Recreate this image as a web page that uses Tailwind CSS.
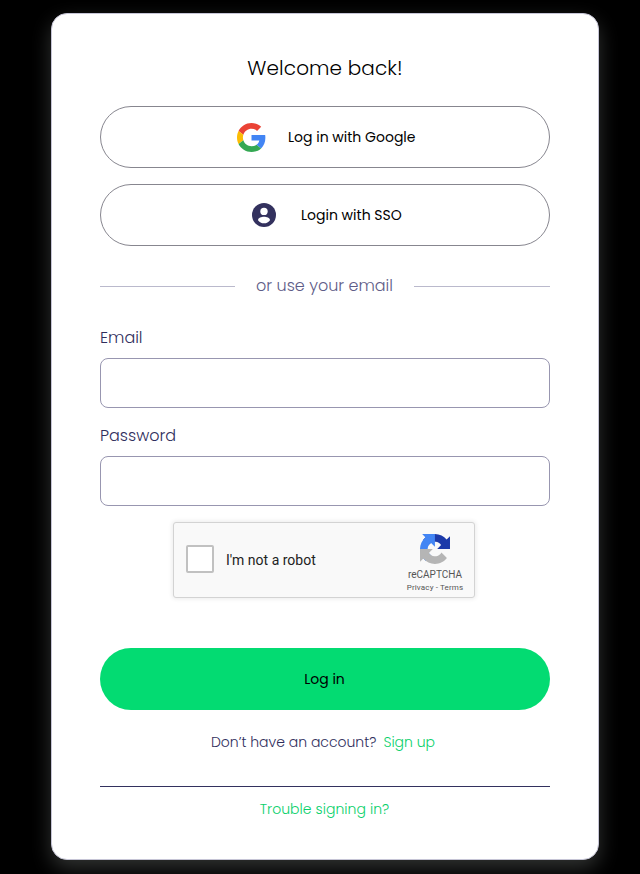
<!DOCTYPE html>
<html lang="en">
<head>
<meta charset="utf-8">
<title>Log in</title>
<script src="https://cdn.jsdelivr.net/npm/@tailwindcss/browser@4"></script>
</head>
<body class="bg-black h-[874px] overflow-hidden pt-[13px] pl-[51px] font-[Poppins,Inter,sans-serif] text-[#2f2e5c]">
<main class="w-[548px] h-[847px] rounded-[16px] bg-white border border-[#c6c5d6] px-12 pt-[39px] shadow-[0_8px_20px_rgba(245,255,252,0.2)]">
  <h1 class="h-[30px] flex items-center justify-center text-[20px] font-light text-black whitespace-nowrap tracking-[0.1px]">Welcome back!</h1>
  <button class="mt-[23px] w-full h-[62px] rounded-full border border-[#87868f] flex items-center pl-[136px] text-[14px] text-black">
    <svg class="size-[29px] mr-[22px]" viewBox="0 0 48 48"><path fill="#ea4335" d="M24 9.5c3.54 0 6.71 1.22 9.21 3.6l6.85-6.85C35.9 2.38 30.47 0 24 0 14.62 0 6.51 5.38 2.56 13.22l7.98 6.19C12.43 13.72 17.74 9.5 24 9.5z"/><path fill="#4285f4" d="M46.98 24.55c0-1.57-.15-3.09-.38-4.55H24v9.02h12.94c-.58 2.96-2.26 5.48-4.78 7.18l7.73 6c4.51-4.18 7.09-10.36 7.09-17.65z"/><path fill="#fbbc05" d="M10.53 28.59c-.48-1.45-.76-2.99-.76-4.59s.27-3.14.76-4.59l-7.98-6.19C.92 16.46 0 20.12 0 24c0 3.88.92 7.54 2.56 10.78l7.97-6.19z"/><path fill="#34a853" d="M24 48c6.48 0 11.93-2.13 15.89-5.81l-7.73-6c-2.15 1.45-4.92 2.3-8.16 2.3-6.26 0-11.57-4.22-13.47-9.91l-7.98 6.19C6.51 42.62 14.62 48 24 48z"/></svg>
    <span class="whitespace-nowrap">Log in with Google</span>
  </button>
  <button class="mt-4 w-full h-[62px] rounded-full border border-[#87868f] flex items-center pl-[151px] text-[14px] text-black">
    <svg class="size-[24px] mr-[25px]" viewBox="0 0 24 24"><circle cx="12" cy="12" r="12" fill="#33315e"/><circle cx="12" cy="8.4" r="3.7" fill="#fff"/><path fill="#fff" d="M6 17.2c.2-2.4 3.4-3.4 6-3.4s5.8 1 6 3.4c-1.3 1.9-3.5 3.1-6 3.1s-4.700-1.200-6-3.100z"/></svg>
    <span class="whitespace-nowrap">Login with SSO</span>
  </button>
  <div class="mt-[28px] h-6 flex items-center">
    <span class="h-px w-[135px] bg-[#bab9cc]"></span>
    <span class="w-[179px] text-center text-[16px] font-light text-[#5e5c87] whitespace-nowrap">or use your email</span>
    <span class="h-px w-[136px] bg-[#bab9cc]"></span>
  </div>
  <form>
    <label class="mt-[28px] h-6 flex items-center text-[16px] font-light" for="email">Email</label>
    <input id="email" type="email" class="mt-2 block w-full h-[50px] rounded-lg border border-[#9896b0]">
    <label class="mt-4 h-6 flex items-center text-[16px] font-light" for="pw">Password</label>
    <input id="pw" type="password" class="mt-2 block w-full h-[50px] rounded-lg border border-[#9896b0]">
    <div class="mt-4 ml-[73px] w-[302px] h-[76px] rounded-[3px] border border-[#d3d3d3] bg-[#f9f9f9] shadow-[0_0_4px_1px_rgba(0,0,0,0.08)] flex font-[Roboto,sans-serif]">
      <span class="mt-[22px] ml-3 size-[28px] shrink-0 border-2 border-[#c1c1c1] rounded-[2px] bg-white"></span>
      <span class="ml-3 mt-[28px] w-[160px] h-[18px] shrink-0 leading-[18px] text-[14px] text-[#222] whitespace-nowrap">I'm not a robot</span>
      <div class="w-[98px] shrink-0 flex flex-col items-center pt-[11px] text-[#555]">
        <svg class="size-[30px] -ml-px mb-px" viewBox="0 0 64 64"><path fill="#1c3aa9" d="M64 31.955l-.033-1.37V4.687l-7.16 7.16C50.948 4.674 42.033.093 32.05.093c-10.4 0-19.622 4.96-25.458 12.64l11.736 11.86a15.55 15.55 0 0 1 4.754-5.334c2.05-1.6 4.952-2.906 8.968-2.906.485 0 .86.057 1.135.163 4.976.393 9.288 3.14 11.828 7.124l-8.307 8.307L64 31.953"/><path fill="#4285f4" d="M31.862.094l-1.37.033H4.594l7.16 7.16C4.58 13.147 0 22.06 0 32.046c0 10.4 4.96 19.622 12.64 25.458L24.5 45.768a15.55 15.55 0 0 1-5.334-4.754c-1.6-2.05-2.906-4.952-2.906-8.968 0-.485.057-.86.163-1.135.393-4.976 3.14-9.288 7.124-11.828l8.307 8.307L31.86.095"/><path fill="#b5b5b5" d="M.001 32.045l.033 1.37v25.898l7.16-7.16c5.86 7.173 14.774 11.754 24.76 11.754 10.4 0 19.622-4.96 25.458-12.64l-11.736-11.86a15.55 15.55 0 0 1-4.754 5.334c-2.05 1.6-4.952 2.906-8.968 2.906-.485 0-.86-.057-1.135-.163-4.976-.393-9.288-3.14-11.828-7.124l8.307-8.307c-10.522.04-22.4.066-27.295-.005"/></svg>
        <span class="mt-[4px] text-[10px] leading-[12px] whitespace-nowrap">reCAPTCHA</span>
        <span class="mt-px text-[8px] leading-[11px] whitespace-nowrap tracking-[0.15px]">Privacy - Terms</span>
      </div>
    </div>
    <button class="mt-[50px] w-full h-[62px] rounded-full bg-[#03db72] flex items-center justify-center text-[14px] text-black pr-px">Log in</button>
  </form>
  <p class="mt-5 h-6 flex items-center justify-center text-[14px] font-light whitespace-nowrap pr-1"><span class="mr-[7px]">Don’t have an account?</span><a class="text-[#08d06b]">Sign up</a></p>
  <div class="mt-8 h-px bg-[#33315e]"></div>
  <a class="mt-[10px] h-6 flex items-center justify-center text-[14px] font-light text-[#08d06b] whitespace-nowrap pr-px tracking-[0.05px]">Trouble signing in?</a>
</main>
</body>
</html>
